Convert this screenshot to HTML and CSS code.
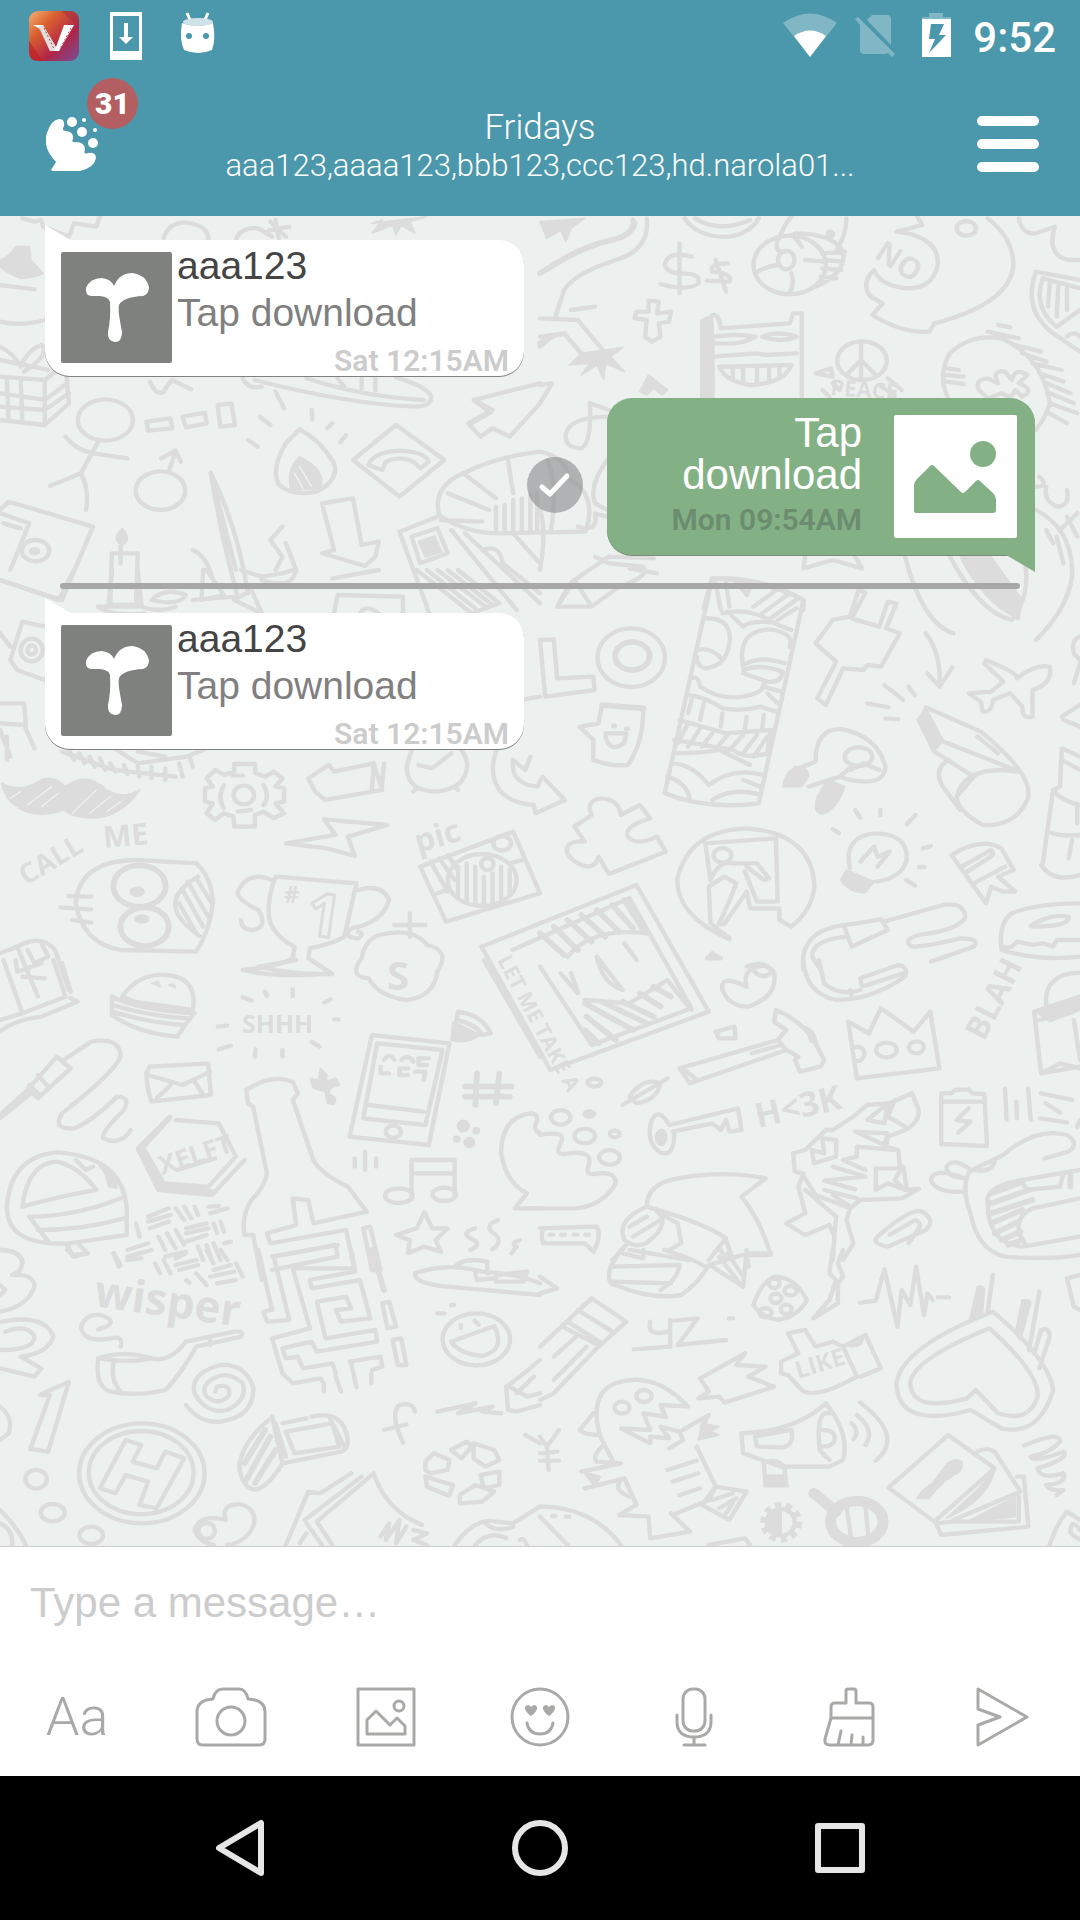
FILE: index.html
```html
<!DOCTYPE html>
<html lang="en">
<head>
<meta charset="utf-8">
<meta name="viewport" content="width=device-width, initial-scale=1">
<title>Fridays</title>
<link rel="stylesheet" href="styles.css">
</head>
<body>
<div class="status">
  <div class="status-group notices">
    <svg width="50" height="50" viewBox="0 0 50 50" aria-hidden="true">
      <defs><linearGradient id="vid" x1="0" y1="0" x2="1" y2="1"><stop offset="0" stop-color="#f6b277"/><stop offset=".3" stop-color="#d9602f"/><stop offset=".65" stop-color="#b02548"/><stop offset="1" stop-color="#75509a"/></linearGradient></defs>
      <rect width="50" height="50" rx="9" fill="url(#vid)"/>
      <path d="M0 30L14 50H9Q0 50 0 41Z" fill="#c01f26" opacity=".7"/><path d="M32 0L50 16V9Q50 0 41 0Z" fill="#a22b42" opacity=".5"/>
      <path d="M4 14H14L27 36 35 14H45L30 40H21L11 18Z" fill="#fff"/><path d="M14 14L27 36 25 40H21L9 16Z" fill="#c9c0c0" opacity=".5"/>
      <path d="M15 17L25 38M42 17L31 38" stroke="#bd3b4d" stroke-dasharray="2 2" fill="none"/>
    </svg>
    <svg width="50" height="50" viewBox="0 0 50 50" aria-hidden="true"><path fill="#fff" fill-rule="evenodd" d="M9 1H41V49H9ZM12 5V40H38V5Z"/><path d="M25 12V28" stroke="#fff" stroke-width="4"/><path d="M18 26H32L25 33Z" fill="#fff"/></svg>
    <svg width="50" height="50" viewBox="0 0 50 50" aria-hidden="true"><path d="M14 2L18 11M35 2L31 11" stroke="#fff" stroke-width="3"/><path d="M9 12Q24 18 40 12Q43 28 39 39Q25 45 11 39Q6 28 9 12Z" fill="#fff"/><ellipse cx="25" cy="11" rx="15" ry="4" fill="#cfe2e8"/><circle cx="16" cy="25" r="3" fill="#4b97ab"/><circle cx="33" cy="25" r="3" fill="#4b97ab"/></svg>
  </div>
  <div class="status-group">
    <svg width="54" height="46" viewBox="0 0 54 46" aria-hidden="true"><path d="M0 10Q27-9 54 10L27 44Z" fill="#fff" opacity=".3"/><path d="M11 23Q27 12 43 23L27 44Z" fill="#fff"/></svg>
    <svg width="40" height="46" viewBox="0 0 40 46" aria-hidden="true"><g fill="#fff" opacity=".3"><path d="M12 7L17 2H32Q36 2 36 6V32Z"/><path d="M0 6L3 4 40 41 37 44 33 40Q32 41 30 41H9Q5 41 5 37V12Z"/></g></svg>
    <svg width="42" height="46" viewBox="0 0 42 46" aria-hidden="true"><path d="M16 0H30V4H38V7H9V4H16Z" fill="#fff" opacity=".3"/><path fill="#fff" fill-rule="evenodd" d="M9 6H38V44H9ZM18 11L16 26H22L16 40 33 22H26L31 11Z"/></svg>
    <time class="clock">9:52</time>
  </div>
</div>

<header class="header">
  <button class="home" type="button" aria-label="Home, 31 unread">
    <svg width="54" height="58" viewBox="0 0 54 58" aria-hidden="true"><g fill="#fff"><path d="M5 55L10 47Q-4 32 1 18Q5 5 13 4Q19 4 18 11Q15 16 20 16Q28 17 27 24Q25 28 30 27Q39 27 39 35Q37 40 42 38Q50 37 50 43Q48 53 34 56H7Z"/><circle cx="26" cy="7" r="5"/><circle cx="36" cy="17" r="5"/><circle cx="47" cy="28" r="5"/><circle cx="38" cy="5" r="2"/><circle cx="49" cy="15" r="2"/></g></svg>
    <span class="badge">31</span>
  </button>
  <div class="heading">
    <h1>Fridays</h1>
    <p>aaa123,aaaa123,bbb123,ccc123,hd.narola01...</p>
  </div>
  <button class="menu" type="button" aria-label="Menu"><span></span><span></span><span></span></button>
</header>

<main class="chat">
<svg class="wallpaper" viewBox="0 216 1080 1330" preserveAspectRatio="xMinYMin slice" aria-hidden="true">
<!-- top left -->
<g transform="translate(0,210) scale(.3444,.3333)">
<path d="M65 25L100 35 120 30 125 50 150 60 200 80 215 40 280 50 290 20M475 85Q490 35 540 38Q605 45 605 88M685 88Q700 50 750 55L790 80M785 35L830 80M780 62L840 50M800 30L810 85"/>
<path class="f" d="M0 150Q30 140 45 110L85 110 90 150 125 190Q100 205 60 205Q20 190 0 170Z"/>
<path d="M0 225L100 238M0 335Q60 350 130 330"/>
<path class="f" d="M1080 40L1110 30 1080 70 1140 45 1150 75 1165 45 1205 70 1190 35 1240 20Z"/>
<path d="M0 500L130 510 190 460 200 580 130 645 0 630M130 510V645M20 505L25 632M60 508L65 638M0 550L130 570 195 520M0 590L130 600 200 550M0 410Q40 430 60 470Q80 420 120 405Q150 430 70 485M0 450L140 480"/>
<path d="M435 515Q455 560 475 545Q490 520 500 510L555 538M705 505Q720 540 760 530M740 510Q1000 580 1200 590Q1260 590 1250 555Q1230 525 1150 503M890 505Q1050 560 1230 570M980 505L1000 530M1050 505V535M1090 505V540"/>
<path d="M1568 520L1375 570 1430 600 1360 640 1395 680 1430 655 1480 680 1568 580"/>
<path class="b" d="M1385 575L1425 605 1365 640"/>
<ellipse cx="306" cy="630" rx="80" ry="62"/><path d="M285 695L235 790M190 680Q220 720 270 730L370 745M235 790L145 828M235 790Q260 840 250 900"/>
<path d="M425 635L495 625 500 655 430 662ZM530 620L595 608 600 640 540 652ZM632 585L672 580 682 645 640 650Z"/>
<ellipse cx="466" cy="842" rx="72" ry="58"/><path d="M490 785L510 725M468 745L510 722 525 755"/>
<path d="M870 658L830 700Q785 780 810 825Q850 860 920 845Q985 810 970 760Q930 690 870 658ZM800 545L825 595M905 600L907 628M755 620L785 645M720 690L748 710M965 640L950 655M1005 675L988 697"/>
<path class="f" d="M870 740Q830 780 845 840L930 835Q950 780 870 740Z"/><path class="cut" d="M855 790L880 835M870 770L905 830"/>
<path d="M1150 645L1290 750 1160 860 1025 750ZM1070 765Q1085 725 1160 722Q1235 725 1245 755L1220 775 1200 755Q1160 735 1120 755L1110 780Z"/>
<path d="M1275 915Q1255 830 1345 790Q1440 740 1568 725Q1640 740 1650 800M1345 790L1440 865M1475 750L1490 850M1300 850L1420 900M1275 915Q1350 970 1450 970L1700 965M1280 930L1400 935M1440 890V960M1465 885V960M1490 870V960M1515 865V960M1540 855V960M1560 850V960M1590 750Q1620 830 1600 960M1640 800Q1740 850 1700 965"/>
<path d="M935 880L1025 865 1050 1005 1100 995 1090 1040 1060 1068 935 1030 970 1020ZM820 950L785 990 820 1040 800 1080M830 1000L860 1080Q850 1140 760 1110M560 1020Q600 1040 615 1100M320 1180L325 1030H400L395 1180M350 1010V1060"/>
<path d="M612 790Q640 960 670 1080L690 1160 560 1170M612 790Q690 950 720 1150M612 790L685 1080"/>
<path class="f" d="M355 1005Q320 990 355 955Q385 990 355 1005Z"/>
<path d="M0 900L25 875 270 950 180 1170 0 1110M0 910L85 940 30 1080M10 940L60 955"/><ellipse cx="103" cy="1022" rx="40" ry="32"/><ellipse cx="100" cy="1024" rx="10" ry="6"/>
<path d="M1160 965L1270 920M1160 965L1250 1220M1195 980L1270 955 1300 1030 1220 1060ZM1310 960L1500 1200M1350 970L1568 1180M1400 1020Q1450 1000 1460 1060L1568 1150M1490 970L1568 1060"/>
<path class="f" d="M1215 995L1262 978 1282 1025 1235 1042Z"/>
</g>
<!-- top right -->
<g transform="translate(540,210) scale(.3444,.3333)">
<path d="M310 25Q320 120 220 150Q100 190 70 240L45 320M270 30Q270 80 200 90Q120 110 60 150L0 190M0 325L110 330 150 380 190 430M0 380L70 370 120 430M90 300L160 290M0 410Q40 370 60 375"/>
<path class="f" d="M0 35L130 25 90 55 75 95 60 60 20 85ZM120 430L190 420 240 412 205 440 245 485 190 460 185 510 165 465 120 495 145 460 85 465Z"/>
<path class="b" d="M275 40Q265 80 200 92Q120 110 0 190M30 380L0 400"/>
<path d="M405 100V250M440 140Q370 120 362 165Q370 190 410 190Q470 190 460 220Q430 245 350 222M545 160Q490 160 500 185Q560 190 550 215L485 212M510 150L540 245"/>
<path d="M420 25Q460 85 550 80Q610 70 635 25M450 25Q520 70 610 30M695 85Q710 40 730 20M890 25Q890 70 860 125"/>
<ellipse cx="725" cy="165" rx="105" ry="88"/><ellipse cx="715" cy="150" rx="24" ry="28"/><path d="M690 85Q680 130 710 125M760 110Q740 80 730 75M770 150L825 155M730 190Q740 220 725 250M690 165Q650 170 625 190M740 70Q850 70 880 125Q890 190 800 230M820 130L885 125M825 150L880 155M820 175L875 180M815 200L860 205"/><circle class="f" cx="843" cy="73" r="12"/>
<path d="M1095 20L1110 45 1035 65Q1160 80 1155 165Q1140 235 1070 235Q990 230 970 180Q930 220 960 260L995 280 965 315Q1050 370 1130 365L1145 340Q1370 280 1375 160Q1370 80 1300 25"/><ellipse cx="1238" cy="55" rx="28" ry="22"/>
<path d="M1390 25Q1400 75 1440 70L1495 50Q1470 130 1530 150L1568 150M1568 210L1440 185Q1400 300 1490 370L1568 425M1568 235L1460 205Q1430 290 1500 350L1568 300M1480 220L1475 290M1505 230L1500 320M1530 235V300M1530 380Q1550 360 1568 380"/>
<path d="M315 272L345 275 340 310 380 305 375 335 345 340 350 380 325 395 305 380 310 330 275 325 280 305 315 305Z"/>
<path class="f" d="M467 330L500 315 505 400V565H467Z"/><path d="M500 315Q520 310 525 355L725 340 735 310 760 310V565M500 440L630 430 655 435 745 430M505 380Q570 370 625 380Q590 405 510 400M645 380Q690 360 745 380Q700 400 645 380M520 470L730 465Q710 520 610 525Q540 515 520 470ZM560 470V510M590 470V520M630 470V520M665 470V515M695 470V500"/>
<ellipse cx="935" cy="452" rx="72" ry="58"/><path d="M932 395V510M932 450L890 495M932 450L975 495M800 490L845 475 850 500ZM820 540L840 560M850 520L870 540M990 530L1030 555M1010 505L1050 540"/>
<path d="M1190 575Q1150 500 1190 430Q1250 370 1340 385Q1460 440 1480 580Q1470 620 1440 660M1180 475L1215 480M1180 495L1230 500M1180 515L1230 522M1300 365L1390 385M1330 345L1365 352M1380 405L1455 425M1400 430L1470 455M1430 460L1515 480M1450 490L1520 515M1470 520L1540 550M1480 550L1550 580M1480 580L1560 610M1480 610L1530 640M1275 540Q1260 510 1300 505L1330 520Q1310 480 1350 485L1370 510Q1380 470 1415 495L1390 520Q1440 540 1400 560L1380 540Q1370 570 1340 550L1300 565Z"/>
<path class="f" d="M290 545L315 495 370 540 355 555 330 535 310 555Z"/>
<path d="M0 525L35 520 0 580M200 600L145 580Q150 700 120 715Q70 715 75 670Q90 620 200 620M195 750Q140 830 160 880L195 900M110 950Q170 970 160 910L195 920"/>
<path d="M1450 800Q1480 830 1440 830M1530 840Q1540 890 1500 890Q1460 870 1470 830M1560 910L1510 960M1530 920L1560 980M0 900Q20 960 0 1080M50 1190L100 1110 200 1040M160 1040L200 1060 300 1070Q320 1100 230 1130L150 1190 50 1190Q90 1110 100 1110L150 1190M200 1040L330 1045M260 1075L340 1090M770 1040L765 1075 850 1050 935 1075 915 1040M475 1195L500 1105Q650 1110 765 1170V1200"/>
<path d="M1060 1040Q1110 1240 1200 1270M1190 1040Q1280 1210 1370 1230Q1430 1150 1405 1040M1440 900Q1550 960 1545 1100Q1530 1200 1440 1290M1470 960L1490 1000M1500 980L1520 1060"/>
<path class="f" d="M1220 1040H1310L1400 1170 1390 1230Q1280 1170 1220 1040Z"/>
</g>
<!-- middle left -->
<g transform="translate(0,570) scale(.3444,.3333)">
<path d="M215 0L170 90 0 30M325 0L315 105H410L400 0M285 110H410Q460 130 510 110M285 110Q320 140 420 130M440 90Q480 50 540 75Q520 110 440 90M590 0L585 90 650 75 600 0M680 90L730 60 760 130 700 100ZM700 0L760 20 820 10 850 0M965 25L1100 0M970 130L980 75 1170 80V130M1045 130Q1060 100 1100 130M1210 0L1370 130 1450 100 1330 0M1240 0L1380 115M1270 0L1410 110M1300 0L1430 105"/>
<path d="M130 170L65 155 30 270 50 300 130 330M0 190L30 230M0 400H70L75 465 0 460M0 480L30 560M70 465L100 535M20 500V570"/><ellipse cx="92" cy="240" rx="32" ry="34"/><ellipse cx="92" cy="240" rx="12" ry="14"/>
<path d="M180 545L330 600 510 620M200 540L215 570M230 550L245 580M260 560L275 590M290 565L305 600M320 580L335 605M360 585L370 612M400 590L405 620M440 590V625M480 595V630M520 580L530 620M550 560L560 590M340 540L400 580 540 560 590 540M400 545L480 560"/>
<path class="f" d="M5 640Q60 670 110 635Q150 610 190 650Q250 600 310 660Q360 690 405 660Q360 730 290 742Q220 750 185 720Q100 750 50 710Q15 690 5 640Z"/><path class="cut" d="M30 685L60 665M80 705L150 650M120 710L170 670M210 730L280 660M260 730L320 680M310 725L350 695"/>
<path d="M680 582H740L742 610 770 620 795 605 820 625 800 650 825 655V695L800 700 825 730 795 745 765 725 740 735V770H680L678 740 650 730 625 750 600 730 618 700 595 695V655L618 650 600 625 625 600 650 615 680 605Z"/><ellipse cx="708" cy="675" rx="30" ry="28"/><path d="M650 645Q630 680 650 715M765 645Q785 680 765 705M675 617L705 617M690 725L730 720"/>
<path d="M895 625L955 585 970 605 1085 580 1110 660 945 690 915 665ZM1085 580L1080 660M1115 580L1108 660"/>
<path d="M1195 545Q1160 620 1215 655Q1280 680 1335 640Q1375 590 1340 540M1215 585L1255 595 1310 550M1210 655L1200 665M1320 650L1330 660"/>
<path d="M1455 510Q1410 600 1450 660Q1480 700 1550 705L1555 730 1640 690 1575 620 1560 650Q1480 640 1490 570L1525 600 1540 560"/>
<path d="M940 748L1125 765 1010 800 1030 858 950 835 830 820 975 795Z"/>
<path d="M1220 890L1490 785 1568 970 1295 1055ZM1250 875L1300 965M1275 865L1320 930M1300 855L1330 900M1480 880L1520 870M1270 970L1300 960"/><ellipse cx="1400" cy="930" rx="100" ry="78"/><ellipse cx="1458" cy="820" rx="26" ry="22"/><ellipse cx="1415" cy="882" rx="18" ry="18"/><path d="M1330 890V980M1355 880V995M1380 890V1000M1405 920V1000M1430 910V1000M1455 890V985M1480 900V970"/>
<path d="M570 880L400 870Q230 870 220 1000Q240 1120 350 1140L570 1145Q610 1080 618 1000Q615 920 570 880ZM200 978L265 980M175 1012L265 1018M210 1050L265 1058"/><g class="b"><ellipse cx="405" cy="948" rx="76" ry="62"/><ellipse cx="420" cy="1070" rx="70" ry="58"/></g><ellipse class="f" cx="398" cy="965" rx="20" ry="14"/><ellipse class="f" cx="412" cy="1047" rx="20" ry="12"/><path d="M575 920Q440 1000 580 1098M530 960L590 1070M545 935L610 1050M570 925L615 1000M520 1000L570 1090"/>
<path d="M800 920L1035 940 1000 1100Q970 1120 900 1135M800 920Q770 1000 785 1060Q810 1110 855 1130L850 1165Q810 1190 705 1200Q800 1225 960 1210L895 1165 900 1135M790 930Q720 900 690 965Q690 990 750 1020Q780 1070 735 1080Q700 1080 700 1050M1040 960Q1110 940 1130 990Q1110 1060 1020 1075Q990 1100 1040 1105Q1060 1090 1040 1085M1145 1065H1235M1190 1030V1100"/>
<path d="M50 1130Q120 1090 160 1140L200 1260M0 1150L50 1130 110 1280M80 1140L100 1180 140 1160 120 1120"/>
</g>
<!-- middle right -->
<g transform="translate(540,570) scale(.3444,.3333)">
<path d="M0 210L40 208 50 325 155 320 158 360 15 380ZM-80 260L-110 400 0 380"/><ellipse cx="265" cy="263" rx="98" ry="88"/><ellipse class="b" cx="268" cy="258" rx="50" ry="42"/>
<path class="b" d="M180 405L300 415"/><path d="M180 405L170 460 115 470 155 510V570Q200 590 255 585Q300 520 300 415M190 490H250Q250 530 215 532Q190 525 190 490Z"/><ellipse class="f" cx="215" cy="468" rx="7" ry="5"/><ellipse class="f" cx="253" cy="476" rx="7" ry="5"/>
<path d="M500 25Q650 20 765 90L635 700Q480 720 362 670ZM510 40L525 120M540 35L550 110M570 35L600 75 615 40M620 110L700 50M645 130L725 70M670 145L750 85M690 150L745 115M530 130Q610 110 680 160L730 180M545 125L590 170Q610 150 680 158M475 145Q560 140 550 220Q540 290 480 295Q455 290 455 260M455 240Q500 230 530 270M590 290Q570 180 670 178Q740 190 725 230M590 285Q640 255 710 280M590 300Q640 280 705 305Q700 340 660 335L590 310M440 325Q460 315 465 350Q520 390 590 380Q650 370 650 340M430 375Q480 380 530 415Q590 425 640 410L685 425M440 390L430 430M475 400L465 450M530 430L525 470M600 440L595 475M650 435L645 475M405 450L540 490 670 480 660 550Q600 570 560 540L390 510M400 520L430 460M430 530L465 475M470 530L500 490M510 535L545 495M550 540L590 495M590 550L630 495M620 560L660 500M390 550Q470 550 520 540L610 585M380 580Q440 580 490 645Q560 590 650 615M370 620Q430 640 435 690M500 690Q560 650 640 675M590 630L640 650M660 370L690 400M650 350L700 365"/>
<path d="M925 60L900 140 850 150 800 220 860 275 805 385 830 405 880 295 940 300 950 285 990 290 1045 190 1005 175 1035 100 1010 95 985 170 905 145 945 68ZM1120 190Q1165 250 1160 345M1125 310L1160 350 1197 292M1000 345L1055 390M1070 350L1088 375M950 400L1012 412M1003 445L1040 448"/>
<path d="M1295 270Q1390 310 1385 325Q1440 280 1480 290Q1490 340 1430 360L1430 440Q1400 450 1400 410L1365 370 1315 390Q1310 430 1285 425L1280 395 1245 370 1310 365 1345 335 1290 280Z"/>
<path d="M1120 412L1280 485Q1440 620 1415 690Q1380 770 1285 765Q1210 720 1210 680Q1230 600 1340 600L1385 605M1160 510L1380 600M1100 450L1145 545 1260 620 1210 680M1185 570Q1140 600 1170 650L1220 720M1270 500L1330 550"/><path class="f" d="M1120 412L1095 450 1145 545 1170 510Z"/>
<path d="M800 575Q800 470 880 478Q980 500 1003 590Q1000 650 900 630L870 620 780 650M800 575L740 600M870 620L905 590M900 600L940 580 985 600"/><ellipse cx="925" cy="560" rx="40" ry="28"/><path class="f" d="M740 590Q780 590 780 620L760 650 705 650Q710 610 740 590ZM835 630L885 650Q860 720 820 732Q790 730 805 680Z"/>
<path d="M100 770L150 735Q130 690 180 685Q230 690 235 735L290 705 320 745Q240 770 255 800Q280 830 340 800L365 845 200 912 170 860Q160 900 120 885Q70 860 80 830 90 810 130 815Z"/>
<path d="M550 1108Q400 1040 398 930Q430 780 600 775Q790 790 797 950Q790 1020 730 1070L695 1050V1015H610L600 965 535 1062H520L555 980 570 940 535 920 490 950 495 1060 550 1105M495 930L480 820 685 805 690 995H630L595 905M495 930Q520 870 560 880L630 880 665 925 650 930 600 890"/><ellipse cx="530" cy="856" rx="26" ry="22"/>
<path d="M900 895Q880 800 970 790Q1070 790 1065 870Q1050 925 975 935M930 875L970 830 980 860 1015 845 980 890M915 720L930 743M988 720V735M1090 735L1065 763M850 777L868 790M1112 835L1135 828M1100 891H1116M1062 930L1090 947"/><path class="f" d="M890 900L970 935 945 968Q900 970 873 930Z"/>
<path d="M1195 855Q1280 800 1340 835L1375 900 1330 920 1380 965 1345 965 1310 950 1295 1000ZM1225 890L1310 840Q1320 850 1310 860L1240 905M1260 940L1350 890M1460 880L1490 660 1510 650 1515 535 1568 560M1490 660Q1510 690 1568 705M1475 785Q1510 800 1568 795M1455 885Q1490 940 1568 915M1560 705V760M1545 810L1535 865M1515 570L1568 600M1568 200Q1540 210 1550 250L1568 270M1568 280L1550 340M1515 440L1568 405M1520 450L1568 470"/>
<path d="M765 1200Q750 1080 890 1065L990 1048 1010 1080 905 1130 885 1075M1000 1055L1170 1005Q1230 995 1235 1040Q1220 1080 1100 1095Q1050 1110 1080 1130Q1120 1130 1220 1105Q1280 1105 1260 1130L1135 1175M890 1100Q790 1110 790 1160L815 1200"/>
<path d="M1568 1000Q1440 1000 1370 1030Q1330 1060 1340 1140Q1450 1175 1568 1160M1340 1130Q1370 1140 1385 1115L1430 1125 1460 1120 1490 1130 1500 1110 1568 1110M1425 1068Q1480 1030 1535 1040Q1540 1070 1430 1070Z"/>
<path d="M-170 1130L280 945 490 1325 30 1500ZM-80 1140L260 985 440 1315 150 1425 0 1190"/><path class="b" d="M0 1090L70 1155M40 1070L110 1140M80 1050L150 1115M120 1035L190 1100M165 1020L230 1085M210 1005L270 1075M245 990L300 1080"/>
<path d="M80 1160Q150 1070 310 1090M165 1160L240 1260Q180 1240 165 1160M245 1120L280 1170M485 1165L500 1150 525 1165ZM600 1190Q650 1170 670 1200"/>
</g>
<!-- lower left -->
<g transform="translate(0,960) scale(.3444,.3333)">
<path d="M10 0L65 160 190 110 155 0M180 10L205 95M0 180L65 160M0 215Q40 180 120 170L225 125 205 115M45 0L50 35 120 10M65 50L130 55"/>
<path d="M355 110Q400 40 480 45Q575 50 560 150L390 125ZM325 110Q400 150 565 160L540 190 515 230Q400 220 325 165V115M325 155Q440 190 535 195M325 135Q440 170 550 175"/><path class="f" d="M440 70l20-5 5 15zM490 75l15-3 5 12z"/>
<path d="M750 20L860 0M905 0L965 42Q850 45 750 20M1100 -75Q1200 -100 1240 -45Q1310 -30 1270 35Q1260 110 1180 120Q1100 110 1070 55Q1010 50 1050 -5Q1060 -60 1100 -75M705 112L730 122M770 95L775 108M850 88V108M942 127L960 118M632 200L660 197M970 178H983M635 268L670 257M742 268L740 290M820 270V290M905 245L928 260M1405 0L1568 290"/>
<path d="M0 465L80 390 165 290 205 325 110 415 80 385M0 475L90 400M185 300L265 245Q350 230 350 290Q330 340 180 460Q150 510 215 505Q260 490 340 410Q380 410 360 450Q290 520 300 535Q350 560 380 510M110 345L140 380M85 375L110 400"/>
<path d="M435 320L605 310 612 405 440 425Q425 380 425 340ZM430 345L530 375 610 335M455 415L495 375M590 405L565 365"/>
<path d="M1080 225L1305 250 1245 555 1015 530ZM1095 250L1285 270 1235 495 1055 475ZM1070 435L1230 455"/><ellipse cx="1142" cy="515" rx="22" ry="18"/><path d="M1115 300Q1130 275 1145 300M1165 300Q1185 280 1200 305M1245 295H1215V315H1240M1105 320V340H1130M1185 325H1160V345H1185M1205 335H1235L1230 360"/>
<path class="f" d="M1315 185L1395 225Q1350 255 1310 240Z"/><path d="M1330 155Q1400 165 1425 220L1400 225Q1380 190 1325 180Z"/>
<path class="b" d="M1350 380H1485M1350 410H1480M1385 340L1380 435M1450 340L1440 430"/><path class="f" d="M930 325L950 345 945 365 975 355 985 375 960 385 955 400 975 415 970 433 950 430 945 395 910 385 900 355 925 360Z"/>
<circle class="f" cx="1345" cy="498" r="17"/><circle class="f" cx="1383" cy="512" r="9"/><circle class="f" cx="1326" cy="537" r="9"/><circle class="f" cx="1363" cy="548" r="15"/>
<path d="M495 470L400 565 460 690 615 705 710 600M510 480L635 490 685 590 605 680 475 670 420 570M515 630L625 595"/><path class="b" d="M490 475L410 565 465 680 610 695"/>
<path d="M715 390Q790 340 850 365L865 400 850 420 910 600Q930 640 1010 680L1065 755 910 790 895 720 850 715 860 795 775 820 785 850 1005 810 1030 930M715 390L720 430 735 440 775 640Q770 680 730 720Q700 770 710 825H735L760 960M790 890L975 855 980 890 790 930M1055 805L1075 800 1105 930 1080 930Z"/>
<path d="M1030 595V620M1060 575V630M1092 595V620M1195 715V600H1320V705M1195 640H1320"/><ellipse cx="1158" cy="707" rx="40" ry="22"/><ellipse cx="1290" cy="703" rx="34" ry="20"/>
<path d="M1232 757L1255 805 1300 805 1265 840 1280 875 1230 860 1185 880 1190 840 1150 825 1210 805ZM1380 805Q1330 820 1375 840Q1400 855 1365 870M1445 780Q1400 800 1440 825Q1460 845 1430 868M1510 840Q1480 850 1500 860L1485 880"/>
<path d="M200 850Q20 860 20 740Q30 590 165 577Q360 590 368 750V825L200 850M85 770Q220 770 350 715M85 770L140 845M110 810Q240 810 360 775M65 740Q80 610 165 605Q230 620 280 690Q170 710 65 740ZM195 855L210 885 255 880 230 855M220 600L250 630 270 620"/><path class="f" d="M290 620Q340 650 340 685L315 680Q310 640 290 620Z"/>
<path d="M395 790L405 830M430 770L490 745M430 785L495 765M435 805L490 785M510 745L535 780M535 740L555 775M565 740L575 765M605 740L635 738M610 760L660 745M460 830L480 870M485 820L510 865M510 810L535 855M540 805L600 790M540 820L605 805M540 845L600 825M620 790L630 820M640 785L650 815M370 870L430 850M370 890L440 870M575 860L590 900M600 855L615 900M620 850L640 900M650 850L670 845M480 890L540 875M330 880L345 920M0 870Q50 870 65 900"/>
<path d="M1568 520Q1545 510 1560 480Q1560 455 1530 462Q1455 480 1455 580Q1470 670 1530 700L1495 745H1568"/>
</g>
<!-- lower right -->
<g transform="translate(540,960) scale(.3444,.3333)">
<path d="M130 120L260 130 370 60 400 100 440 150M60 40L110 100M90 40L110 95"/><path class="b" d="M130 130L270 210M135 170L220 240M130 210L170 250M180 125L310 190M240 125L330 170M290 100L350 140M330 80L380 110"/>
<path d="M600 80Q520 40 530 90Q550 140 605 140Q690 110 680 40Q660 0 610 30Q590 50 600 80M620 30Q640 60 670 40M765 0Q770 100 860 120Q960 120 1060 50Q1070 20 1040 15L930 55 935 80 1055 40M810 0L825 70Q870 110 930 90M900 90L905 110"/>
<path d="M405 325L690 240 715 270 435 370ZM690 240L715 210 680 185 685 150Q760 180 800 250L825 300 815 320 755 335 740 300 750 290 715 270M415 325L455 360M615 280L700 255M510 215L565 200 568 235 520 235ZM240 435L370 355M260 410Q300 350 350 370Q340 420 280 430Z"/><path class="f" d="M770 200Q800 210 805 250L785 245Z"/><ellipse cx="158" cy="368" rx="20" ry="12"/>
<path d="M895 185L955 220 990 145 1085 215 1133 155 1160 325 920 355ZM910 260Q950 260 940 290Q930 310 915 300"/><ellipse cx="1006" cy="270" rx="30" ry="22"/><ellipse cx="1093" cy="262" rx="22" ry="18"/>
<path d="M1470 140Q1460 40 1568 38M1435 155L1568 110M1435 155L1455 340 1568 320M1455 340L1510 310 1568 325M1550 180L1568 300M1450 180L1550 155"/><path class="f" d="M1440 155L1568 110V150L1480 185Z"/>
<path d="M375 495L575 445 585 510 550 515 540 480 525 510 500 490 385 515M375 495Q345 440 325 480Q305 540 345 575Q390 600 390 515"/><ellipse class="f" cx="352" cy="532" rx="16" ry="24"/>
<path d="M1165 400H1195L1205 390 1245 388 1255 400 1290 402 1298 558 1165 552ZM1170 425L1288 425M1245 445L1210 480 1250 485 1215 518M1350 385L1355 480M1383 425L1385 475M1417 385L1425 480M1455 400L1545 420M1468 430L1510 458M1452 475L1530 487M1568 480L1560 500"/>
<ellipse cx="60" cy="472" rx="28" ry="22"/><ellipse cx="130" cy="528" rx="30" ry="22"/><ellipse cx="202" cy="592" rx="30" ry="22"/><ellipse class="f" cx="143" cy="462" rx="18" ry="12"/><ellipse cx="217" cy="522" rx="14" ry="10"/>
<path d="M0 525Q80 510 60 550Q40 590 80 580Q160 570 140 620Q130 650 170 640Q220 635 220 670Q180 740 100 745H-40M0 805L165 800Q180 830 155 875L130 850H10Q0 830 10 805"/><path d="M28 824h10M62 824h10M98 824h10M132 824h10"/>
<path d="M310 740Q310 670 400 655Q540 630 655 655L585 710Q640 780 670 885L600 885 605 920M310 740Q480 790 540 835L490 900M310 740Q220 780 245 840Q290 880 340 820Q370 780 340 755L400 790 410 850 375 870M250 855L210 900M260 870L430 900M260 800L310 770M270 830L350 780M540 840L560 900M520 860L540 900"/>
<path d="M1080 400L1100 450Q1100 490 1060 510L1010 530 1005 560 1040 570 1045 620 1055 620 1065 690 1100 687 1050 715 930 720 900 745 890 780 910 850 880 900M1080 400L1015 430 950 435 910 470 850 510H830L770 570 735 580 740 635 765 640 750 680 770 760 715 790 770 825 840 795 855 830 850 900M950 480L1010 430 1000 490ZM1030 420L1010 470 1060 500M915 515L1010 520 1000 555ZM920 560L1030 570M920 560V590L880 600 945 630M850 620L945 650 825 662 915 688M975 625H1050L1030 660 1060 690 1010 670 975 690ZM790 570L825 580 820 535 860 540V590L795 610ZM760 640L800 705 900 745M825 690L920 715M770 690L860 770 855 820M850 705L900 740"/>
<path d="M980 830Q1080 740 1110 755Q1150 780 1120 810L1010 860Q960 850 980 830ZM1015 825L1090 780Q1110 790 1100 805L1070 850"/>
<path d="M1255 630L1345 585Q1440 500 1530 525Q1568 550 1535 575L1465 595M1250 630Q1220 680 1250 760Q1270 870 1350 890Q1480 900 1568 885M1250 630Q1200 590 1180 620Q1180 650 1235 655M1235 655Q1140 620 1135 660Q1150 700 1230 695M1568 630L1400 660Q1290 680 1300 730Q1300 850 1400 860L1568 830M1568 715L1430 745Q1360 780 1410 855M1400 660L1410 690 1510 680 1520 640M1255 630Q1310 640 1320 605"/><path class="b" d="M1310 700L1390 670M1310 730L1420 690M1310 760L1430 720M1310 790L1400 750M1320 820L1390 785M1340 840L1395 815M1360 855L1400 840M1540 640V680"/>
</g>
<!-- bottom left -->
<g transform="translate(0,1250) scale(.3444,.3333)">
<path d="M0 0Q60 0 65 40Q60 70 35 75Q100 70 100 110Q80 170 0 185M0 105L15 120 0 135M5 215Q130 190 155 260Q140 310 60 320L120 355 100 380 0 355M15 245Q80 220 100 260Q100 300 0 300"/>
<path d="M195 0L215 20 255 10M330 10L350 45M370 30L410 25M450 40L465 70M475 30L495 70M510 25L540 10M510 45L570 30M520 60L575 45M600 0L620 40M620 60L670 45M610 80L680 65M630 100L685 90M685 40L705 80M570 70L600 105M540 90L550 98M640 0L660 30"/>
<path d="M350 290Q360 255 320 265Q240 280 235 230Q250 190 290 195Q340 210 310 230L285 238M285 325Q360 300 440 325Q380 340 285 325Q275 410 320 425Q400 440 480 420Q520 380 570 290L700 260Q710 240 680 245L540 275Q490 340 440 325M330 335Q320 390 350 425M610 262V285"/>
<path d="M540 465Q580 520 640 515Q740 500 735 410Q710 340 640 345Q550 370 565 430Q600 495 660 480Q720 450 705 400Q660 360 620 385Q580 410 600 440Q640 470 665 435Q670 400 630 410L625 425"/>
<path d="M750 0L790 180 765 185 775 215 840 210 795 20 980 -15M1020 0L1030 55 850 55 900 235 790 265 820 370 850 400 930 385 940 400M900 90L905 115 1045 90 1075 205 990 215 975 180 1020 175 1005 140 920 155 945 265 1090 240 1095 275 920 305 905 275 820 295 830 325 865 320 880 355 965 340 975 370M900 90L1030 65M1015 335L1105 320 1110 350 1080 360M1020 340L1030 390M940 400V425M975 380L990 425M1030 390L1035 412M1078 370V400"/>
<path class="b" d="M1080 0L1115 120"/><path d="M1110 160L1130 155 1150 230 1125 235ZM1140 270L1165 265 1180 345 1155 345Z"/>
<path d="M1205 70Q1300 35 1400 65Q1500 70 1568 100M1205 70Q1200 100 1300 110L1568 135M1320 50Q1350 20 1415 35V70M1380 70L1385 90 1430 85M1440 75L1530 65 1520 95 1440 95Z"/>
<ellipse cx="1383" cy="268" rx="98" ry="78"/><path d="M1310 275L1435 228Q1470 300 1400 318Q1330 310 1310 275Z"/><path d="M1270 190H1290M1310 165h8M1338 225v10M1378 212l12 12"/>
<path d="M1205 485Q1200 455 1160 465Q1130 490 1170 578M1115 540L1180 523M1270 485L1380 460 1330 490 1430 470 1400 485 1455 490M1525 555L1568 580"/>
<path d="M115 435L200 395 140 605 88 597 145 435Z"/><ellipse cx="105" cy="688" rx="31" ry="28"/><ellipse cx="153" cy="788" rx="35" ry="26"/><ellipse cx="265" cy="856" rx="34" ry="26"/><path d="M0 470Q40 500 25 550L0 570M0 780Q50 830 75 885M0 820Q40 840 35 885"/>
<ellipse cx="412" cy="670" rx="182" ry="150"/><ellipse cx="410" cy="668" rx="152" ry="125"/>
<path d="M365 570L410 585 385 635 455 655 480 605 535 625 455 775 405 765 430 695 365 675 335 730 290 715Z"/>
<path d="M820 520L890 505M905 500Q1000 480 1010 570Q1010 600 990 605L820 640M830 545L965 520 985 590 855 610ZM780 510Q700 580 695 650Q700 710 740 720Q780 710 820 640L790 500M800 520L830 620M955 500L1000 590"/><path class="b" d="M770 540L710 640M785 560L715 690M800 600L740 700"/>
<path d="M655 810Q640 760 700 763Q750 780 735 830Q710 880 660 885M655 810Q580 790 565 840Q580 880 620 885"/><ellipse cx="600" cy="843" rx="24" ry="24"/>
<path d="M830 885L895 725 930 730 1020 670M920 815L1085 670Q1120 780 1225 825M920 815L965 885M885 810L1050 680M890 820L935 885M870 880L890 850M1105 860L1130 820 1120 870 1160 810 1150 880 1180 830M1200 840L1240 850 1200 870 1240 885"/>
<path d="M1310 600L1355 575 1370 590 1340 625ZM1375 580L1435 600 1450 630 1410 650 1375 625ZM1395 675L1450 665V705L1405 715ZM1335 760L1335 735 1380 705 1435 725 1400 755ZM1235 680L1315 705 1305 738 1240 710ZM1235 660V635L1260 610 1305 630 1300 660 1250 670Z"/>
<path d="M1320 885Q1380 800 1440 815L1490 820 1568 770M1380 885Q1420 840 1470 865M1410 820Q1440 850 1490 830M1510 870Q1520 860 1530 885M1568 330Q1500 390 1470 410L1475 480 1500 485 1568 465M1480 410L1530 440 1568 430M1500 430L1550 380"/>
</g>
<!-- bottom right -->
<g transform="translate(540,1250) scale(.3444,.3333)">
<path d="M0 80L50 115 0 130M0 290L150 145 250 215 160 300 40 430 0 450M65 230L170 285M80 215L180 280M110 180L210 245M40 320L105 260M40 390L135 290"/>
<path d="M235 0L205 50Q190 100 220 105Q320 150 410 135Q460 100 490 45L605 10M210 50L405 45Q400 90 350 120M210 95L380 100M360 0Q430 20 480 50M300 0V25L240 10M500 50L590 110 600 0M520 20L580 100M545 10L590 80M605 10H670"/>
<path d="M680 80Q740 80 775 150Q750 200 690 210Q640 200 620 165Q640 100 680 80Z"/><ellipse cx="685" cy="145" rx="16" ry="14"/><ellipse cx="655" cy="188" rx="18" ry="14"/><ellipse cx="715" cy="178" rx="16" ry="14"/><ellipse cx="728" cy="122" rx="18" ry="14"/><ellipse cx="680" cy="100" rx="16" ry="14"/>
<path d="M850 0L840 70 860 90 840 150 793 205 865 160V100L880 80 865 40 880 0M930 158L975 152 1000 58 1038 230 1050 120 1075 165 1092 50 1115 195 1125 130 1140 150M1155 142H1188"/>
<path d="M272 298L378 290V210M320 215Q310 260 370 245M390 212L458 205 400 285 540 270M548 205h12M465 385L595 310 570 345 655 350 605 380 680 410 535 458 520 440 460 445 490 425Z"/>
<path d="M720 250L770 240 800 290 850 275 880 290 920 380Q800 450 760 420L720 375 700 370V335L750 310ZM880 290L945 255 990 355 930 380M900 285Q930 290 935 265"/>
<path d="M1315 185Q1480 330 1490 420Q1450 560 1340 535L1250 480Q1040 540 1035 400Q1050 290 1315 185ZM1305 235Q1450 370 1445 440Q1420 520 1330 490L1265 420 1240 445Q1080 490 1075 400Q1080 330 1305 235ZM1315 75L1300 185M1450 125L1420 300M1435 310L1455 240Q1480 230 1480 260L1450 355"/><path class="f" d="M1270 110Q1285 105 1290 115L1285 190 1245 220ZM1400 150Q1425 145 1425 160L1395 270 1380 250Z"/>
<path d="M175 560Q140 430 220 400Q330 360 430 470L350 465 365 500 300 490 320 540 235 535 320 580V560L375 565 350 530 405 545 415 570 375 595M415 540L490 495 470 530M455 590L510 710 490 750 385 795M175 560L215 640M155 490L115 540Q130 555 170 555M180 590Q150 620 165 635L235 640 120 665M130 715L245 685 280 765 230 795 315 800 320 865 435 845 380 790M235 690Q210 720 260 740M370 660L455 632M385 695L460 670M405 735L465 715"/><ellipse cx="238" cy="473" rx="22" ry="18"/><ellipse cx="302" cy="438" rx="22" ry="18"/><path class="f" d="M470 520L520 530 495 545 520 555 460 570ZM125 665L175 680 160 710Z"/><path d="M510 710L600 725 550 810 470 765ZM500 750L560 730M520 775L570 745M540 790L560 760"/>
<path d="M585 550Q740 545 830 460Q900 550 880 630L840 650H700L590 610ZM625 560L730 540Q740 590 700 592L630 590ZM840 490Q800 480 812 600L840 630M820 540Q860 540 855 570Q850 590 820 590M905 520Q930 545 910 568M920 495Q975 540 945 585M930 458Q1060 560 975 632M650 640L655 705H715L710 650M650 640Q680 620 710 650"/><path class="f" d="M655 675H710L720 710H650Z"/>
<path d="M1185 555L1320 655 1145 815 1012 713ZM1270 605Q1300 590 1320 605L1395 725 1200 810M1385 680H1405L1418 830 1165 855 1150 820 1200 815 1390 815V740"/><path class="f" d="M1175 650Q1200 620 1225 635Q1230 665 1200 675L1180 690 1150 720 1130 745 1095 745Q1110 715 1140 700ZM1320 660Q1300 750 1180 805L1270 720ZM1380 740V800L1240 815Z"/>
<path d="M1405 587Q1510 540 1510 575Q1480 610 1425 620Q1430 640 1520 605Q1540 625 1445 655Q1450 690 1520 670Q1530 700 1470 705Q1480 725 1520 720L1500 735"/>
<path d="M0 770Q150 770 235 885M0 800L80 885M35 798h10M75 800h10M490 885L595 865 610 885M1480 885Q1500 820 1530 785L1568 810M1568 840Q1540 800 1540 850L1568 870M0 560L20 590 55 540M0 610L50 605M0 632L55 632M20 590L25 660M1530 85L1568 75M1530 85L1550 170 1568 180"/>
<path class="heavy" d="M795 730L860 785"/><ellipse class="heavy" cx="920" cy="815" rx="76" ry="62"/><path d="M890 765L905 880M945 765L955 880"/><circle class="gear" cx="700" cy="817" r="50"/><circle cx="700" cy="817" r="40"/><path class="f" d="M700 775V860Q655 855 655 817Q655 780 700 775Z"/>
</g>
<g class="words">
<text x="873" y="257" font-size="30" transform="rotate(33 873 257)">NO</text>
<text x="242" y="1033" font-size="25">SHHH</text>
<text x="162" y="1175" font-size="26" transform="rotate(-18 162 1175)">XELFT</text>
<text x="93" y="1306" font-size="44" transform="rotate(8 93 1306)">wisper</text>
<text x="758" y="1128" font-size="34" transform="rotate(-13 758 1128)">H&lt;3K</text>
<text x="984" y="1042" font-size="32" transform="rotate(-63 984 1042)">BLAH</text>
<text x="798" y="1379" font-size="24" transform="rotate(-17 798 1379)">LIKE</text>
<text x="26" y="886" font-size="28" transform="rotate(-31 26 886)">CALL</text>
<text x="104" y="848" font-size="30" transform="rotate(-5 104 848)">ME</text>
<text x="418" y="853" font-size="32" transform="rotate(-16 418 853)">pic</text>
<text x="284" y="903" font-size="24">#</text>
<text x="304" y="934" font-size="60" transform="rotate(8 304 934)" class="outline">1</text>
<text x="387" y="990" font-size="40">S</text>
<text x="497" y="960" font-size="21" transform="rotate(62 497 960)">LET ME TAKE A</text>
<text x="830" y="395" font-size="22" transform="rotate(4 830 395)">PEACE</text>
</g>
</svg>

<article class="bubble received">
  <span class="avatar"><svg width="64" height="70" viewBox="0 0 64 70" aria-hidden="true"><path d="M6 23Q0 22 1 15Q5 5 17 5Q26 6 29 13Q34 0 48 0Q61 2 64 14Q64 21 58 23Q38 24 34 32Q33 37 35 48L37 59Q37 69 30 69Q22 68 23 59Q26 45 25 29Q24 24 15 23Z" fill="#fff"/></svg></span>
  <div class="copy"><h2>aaa123</h2><p>Tap download</p><time>Sat 12:15AM</time></div>
</article>

<div class="sent-row">
  <svg class="check" width="56" height="56" viewBox="0 0 56 56" role="img" aria-label="Delivered"><circle cx="28" cy="28" r="28" fill="#888a8a" fill-opacity=".6"/><path d="M15 30L23 37 40 19" fill="none" stroke="#fff" stroke-width="5" stroke-linecap="round" stroke-linejoin="round"/></svg>
  <article class="bubble sent">
    <div class="copy"><p>Tap download</p><time>Mon 09:54AM</time></div>
    <svg width="123" height="123" viewBox="0 0 123 123" aria-hidden="true"><rect width="123" height="123" rx="2" fill="#fff"/><g fill="#83b185"><circle cx="89" cy="39" r="13"/><path d="M20 96V70Q20 67 23 64L36 51Q38 49 40 51L67 77Q69 79 71 77L82 66Q84 64 86 66L100 79Q102 82 102 85V95Q102 98 99 98H23Q20 98 20 96Z"/></g></svg>
  </article>
</div>

<hr class="divider">

<article class="bubble received">
  <span class="avatar"><svg width="64" height="70" viewBox="0 0 64 70" aria-hidden="true"><path d="M6 23Q0 22 1 15Q5 5 17 5Q26 6 29 13Q34 0 48 0Q61 2 64 14Q64 21 58 23Q38 24 34 32Q33 37 35 48L37 59Q37 69 30 69Q22 68 23 59Q26 45 25 29Q24 24 15 23Z" fill="#fff"/></svg></span>
  <div class="copy"><h2>aaa123</h2><p>Tap download</p><time>Sat 12:15AM</time></div>
</article>
</main>

<form class="composer">
  <input type="text" placeholder="Type a message…" aria-label="Message">
  <div class="tools">
    <button type="button" class="font-tool" aria-label="Text style">Aa</button>
    <button type="button" aria-label="Camera"><svg width="72" height="60" viewBox="0 0 72 60"><path d="M8 58Q2 58 2 52V25Q2 13 18 12Q20 2 28 2H44Q51 2 53 12Q70 13 70 25V52Q70 58 64 58Z"/><circle cx="36" cy="34" r="14"/></svg></button>
    <button type="button" aria-label="Picture"><svg width="60" height="60" viewBox="0 0 60 60"><rect x="2" y="2" width="56" height="56"/><circle cx="43" cy="19" r="5"/><path d="M11 47V33L20 24 34 38 41 31 49 39V47Z"/></svg></button>
    <button type="button" aria-label="Emoji"><svg width="60" height="60" viewBox="0 0 60 60"><circle cx="30" cy="30" r="28"/><path d="M17 36Q19 47 30 47Q41 47 43 36"/><path class="solid" d="M21 29Q14 24 15 20Q18 16 21 20Q25 16 27 20Q28 24 21 29ZM39 29Q32 24 33 20Q36 16 39 20Q43 16 45 20Q46 24 39 29Z"/></svg></button>
    <button type="button" aria-label="Record voice"><svg width="40" height="60" viewBox="0 0 40 60"><rect x="9" y="2" width="22" height="42" rx="10"/><path d="M3 28V36Q4 50 20 50Q36 50 37 36V28M20 50V58M10 58H31"/></svg></button>
    <button type="button" aria-label="Clear"><svg width="52" height="60" viewBox="0 0 52 60"><path d="M8 31V20Q8 16 12 16H23V4Q23 2 25 2H31Q33 2 33 4V16H46Q50 16 50 20V53Q50 58 45 58H7Q1 58 2 52L8 31H50M18 44L15 58M29 48L28 58M40 50V58"/></svg></button>
    <button type="submit" aria-label="Send"><svg width="54" height="60" viewBox="0 0 54 60"><path d="M2 2L51 30 2 58V38L24 30 2 22Z"/></svg></button>
  </div>
</form>

<nav class="system-nav" aria-label="System">
  <button type="button" aria-label="Back"><svg width="58" height="58" viewBox="0 0 58 58"><path d="M50 4V54L8 29Z"/></svg></button>
  <button type="button" aria-label="Home screen"><svg width="58" height="58" viewBox="0 0 58 58"><circle cx="29" cy="29" r="25"/></svg></button>
  <button type="button" aria-label="Recent apps"><svg width="58" height="58" viewBox="0 0 58 58"><rect x="7" y="7" width="44" height="44"/></svg></button>
</nav>
</body>
</html>
```
FILE: styles.css
```css
* { box-sizing: border-box; }

body {
  margin: 0;
  min-height: 100vh;
  display: flex;
  flex-direction: column;
  background: #ecf1ef;
  font-family: "Liberation Sans", Arial, sans-serif;
}

h1, h2, p { margin: 0; font-weight: 400; }

button {
  padding: 0;
  border: 0;
  background: none;
  font: inherit;
  color: inherit;
  cursor: pointer;
}

/* status bar */
.status {
  display: flex;
  justify-content: space-between;
  align-items: center;
  height: 72px;
  padding: 0 24px 0 29px;
  background: #4b97ab;
  color: #fff;
}
.status-group { display: flex; align-items: center; gap: 18px; }
.notices { gap: 22px; }
.clock { padding-top: 3px; font: 500 42px/46px Roboto, sans-serif; }

/* header */
.header {
  display: grid;
  grid-template-columns: 144px 1fr 144px;
  align-items: center;
  height: 144px;
  background: #4b97ab;
  color: #fff;
}
.home {
  position: relative;
  height: 144px;
  padding-left: 46px;
  display: flex;
  align-items: center;
}
.badge {
  position: absolute;
  left: 87px;
  top: 6px;
  width: 51px;
  height: 51px;
  border-radius: 50%;
  background: #b35f62;
  font: 900 30px/52px Roboto, sans-serif;
  text-align: center;
}
.heading { padding-top: 5px; text-align: center; font-family: Roboto, sans-serif; min-width: 0; }
.heading h1 { font-size: 35px; line-height: 38px; font-weight: 300; }
.heading p {
  font-size: 31px;
  line-height: 38px;
  font-weight: 300;
  white-space: nowrap;
  overflow: hidden;
  text-overflow: ellipsis;
}
.menu { display: grid; gap: 13px; justify-self: end; margin-right: 41px; }
.menu span { width: 62px; height: 10px; border-radius: 5px; background: #fff; }

/* conversation */
.chat {
  position: relative;
  flex: 1;
  display: flex;
  flex-direction: column;
  gap: 22px;
  padding: 24px 45px;
  overflow: hidden;
}
.wallpaper {
  position: absolute;
  inset: 0;
  width: 100%;
  height: 100%;
  z-index: -1;
  fill: none;
  stroke: #dddcdc;
  stroke-width: 13;
  stroke-linecap: round;
  stroke-linejoin: round;
}
.wallpaper .f { fill: #dddcdc; stroke-width: 5; }
.wallpaper .b { stroke-width: 17; }
.wallpaper .heavy { stroke-width: 32; }
.wallpaper .gear { stroke-width: 22; stroke-linecap: butt; stroke-dasharray: 17 14; }
.wallpaper .cut { stroke: #ecf1ef; stroke-width: 4; }
.words { fill: #dddcdc; stroke: none; font-family: "Open Sans", sans-serif; font-weight: 700; }
.words .outline { fill: none; stroke: #dddcdc; stroke-width: 3; }

.bubble { position: relative; display: flex; border-radius: 25px; }
.bubble::before { content: ""; position: absolute; width: 29px; height: 17px; }
.copy { display: flex; flex-direction: column; }
.copy time { font: 600 30px/32px Roboto, sans-serif; }

.received {
  align-self: flex-start;
  gap: 5px;
  width: 479px;
  max-width: 100%;
  min-height: 136px;
  padding: 0 15px 0 16px;
  border-top-left-radius: 0;
  background: #fff;
  box-shadow: 0 1px 0 #808080;
}
.received::before {
  left: 0;
  top: -15px;
  background: #fff;
  clip-path: polygon(0 0, 100% 100%, 0 100%);
}
.avatar {
  display: grid;
  place-items: center;
  flex: none;
  width: 111px;
  height: 111px;
  margin: 12px 0;
  border-radius: 2px;
  background: #7f817f;
}
.received .copy { flex: 1; padding-top: 2px; font-size: 39px; line-height: 47px; }
.received h2 { font-size: 39px; color: #444; }
.received p { color: #808080; }
.received time { align-self: flex-end; margin-top: auto; line-height: 30px; color: #ccc; }

.sent-row { display: flex; justify-content: flex-end; align-items: center; gap: 24px; }
.check { margin-top: 16px; }
.sent {
  gap: 32px;
  padding: 17px 18px;
  border-bottom-right-radius: 0;
  background: #83b185;
  box-shadow: 0 1px 0 #7d8a80;
  color: #fff;
}
.sent::before {
  right: 0;
  bottom: -17px;
  background: #83b185;
  clip-path: polygon(0 0, 100% 0, 100% 100%);
}
.sent .copy { width: 237px; padding-left: 45px; margin-top: -3px; text-align: right; font-size: 42px; line-height: 42px; }
.sent time { margin-top: 8px; color: #6b8c6f; white-space: nowrap; align-self: flex-end; }

.divider {
  width: auto;
  height: 6px;
  margin: 6px 15px 2px;
  border: 0;
  border-radius: 3px;
  background: #a8a8a8;
}

/* composer */
.composer { border-top: 1px solid #ccc; background: #fff; }
.composer input {
  display: block;
  width: 100%;
  height: 112px;
  padding: 0 30px;
  border: 0;
  outline: 0;
  background: none;
  font: 42px "Liberation Sans", Arial, sans-serif;
  color: #444;
}
.composer input::placeholder { color: #ccc; opacity: 1; }
.tools { display: grid; grid-template-columns: repeat(7, 1fr); height: 117px; padding-bottom: 29px; align-items: end; }
.tools button { display: grid; place-items: center; height: 60px; color: #a9a9a7; }
.tools svg { fill: none; stroke: currentColor; stroke-width: 3; stroke-linecap: round; stroke-linejoin: round; }
.tools .solid { fill: currentColor; stroke: none; }
.tools .font-tool { font: 300 54px/60px Roboto, sans-serif; }

/* system navigation */
.system-nav { display: flex; height: 144px; padding: 0 90px; background: #000; }
.system-nav button { flex: 1; display: grid; place-items: center; }
.system-nav svg { fill: none; stroke: #e6e6e6; stroke-width: 6; stroke-linejoin: round; }
```
